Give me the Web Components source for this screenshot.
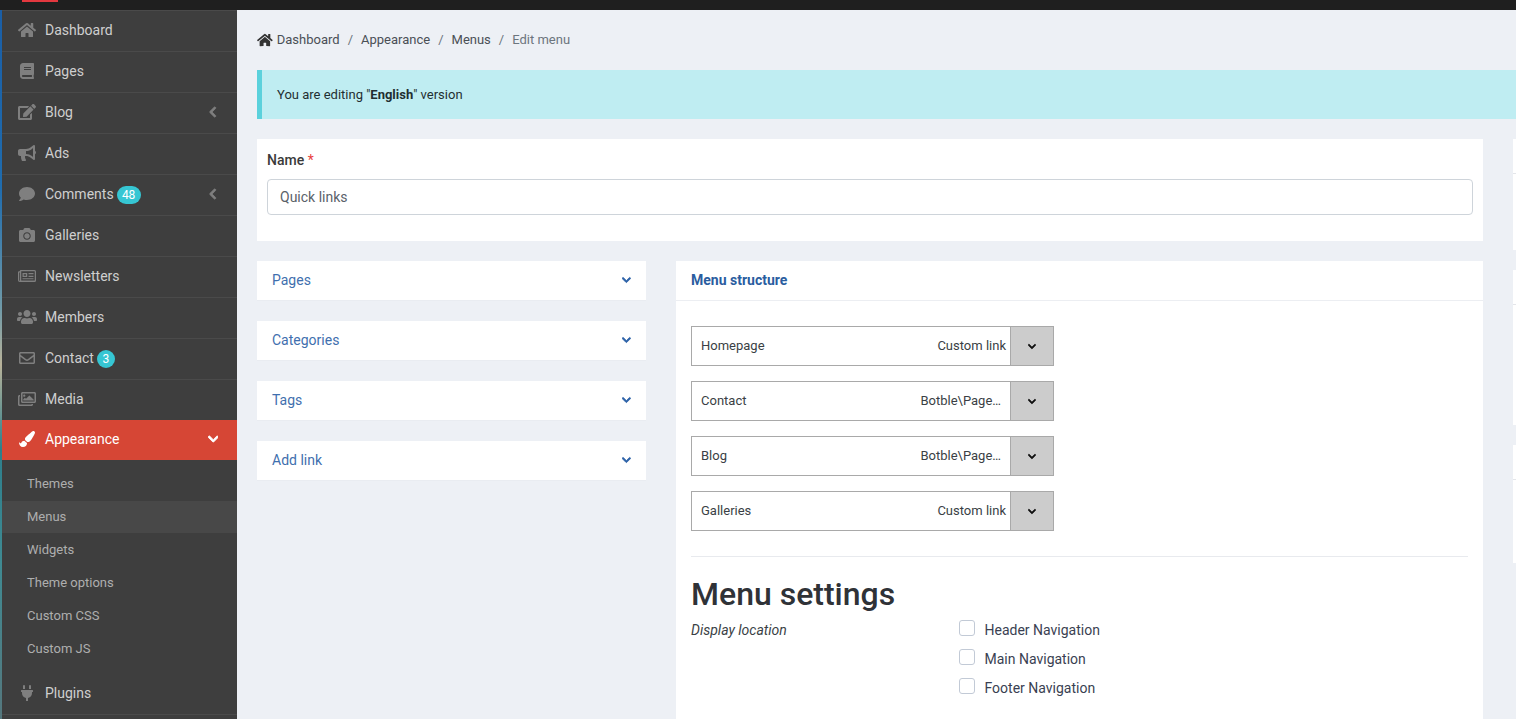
<!DOCTYPE html>
<html lang="en">
<head>
<meta charset="utf-8">
<title>Edit menu</title>
<style>
  html, body { margin: 0; height: 719px; overflow: hidden; }
  body { font-family: Roboto, "Liberation Sans", sans-serif; font-size: 14px; background: #edf0f5; }
</style>
</head>
<body>
<cms-app>
  <top-bar slot="top"></top-bar>
  <side-nav slot="side">
    <nav-item icon="home">Dashboard</nav-item>
    <nav-item icon="book">Pages</nav-item>
    <nav-item icon="edit" arrow="left">Blog</nav-item>
    <nav-item icon="bullhorn">Ads</nav-item>
    <nav-item icon="comment" arrow="left" badge="48">Comments</nav-item>
    <nav-item icon="camera">Galleries</nav-item>
    <nav-item icon="newspaper">Newsletters</nav-item>
    <nav-item icon="users">Members</nav-item>
    <nav-item icon="envelope" badge="3">Contact</nav-item>
    <nav-item icon="images" short>Media</nav-item>
    <nav-item icon="brush" arrow="down" active short>Appearance</nav-item>
    <sub-nav>
      <sub-item>Themes</sub-item>
      <sub-item current>Menus</sub-item>
      <sub-item>Widgets</sub-item>
      <sub-item>Theme options</sub-item>
      <sub-item>Custom CSS</sub-item>
      <sub-item>Custom JS</sub-item>
    </sub-nav>
    <nav-item icon="plug">Plugins</nav-item>
  </side-nav>

  <bread-crumb>
    <crumb-link home>Dashboard</crumb-link>
    <crumb-link>Appearance</crumb-link>
    <crumb-link>Menus</crumb-link>
    <crumb-link last>Edit menu</crumb-link>
  </bread-crumb>
  <info-alert>You are editing "<b>English</b>" version</info-alert>

  <edit-layout>
    <name-card></name-card>
    <div slot="left">
      <fold-panel>Pages</fold-panel>
      <fold-panel>Categories</fold-panel>
      <fold-panel>Tags</fold-panel>
      <fold-panel>Add link</fold-panel>
    </div>
    <menu-card slot="right">
      <menu-row kind="Custom link">Homepage</menu-row>
      <menu-row kind="Botble\Page…" trim>Contact</menu-row>
      <menu-row kind="Botble\Page…" trim>Blog</menu-row>
      <menu-row kind="Custom link">Galleries</menu-row>
      <menu-settings slot="settings">
        <check-line>Header Navigation</check-line>
        <check-line>Main Navigation</check-line>
        <check-line>Footer Navigation</check-line>
      </menu-settings>
    </menu-card>
    <side-stub slot="aside" style="height:111px"></side-stub>
    <side-stub slot="aside" style="height:155px"></side-stub>
    <side-stub slot="aside" style="height:118px"></side-stub>
  </edit-layout>
</cms-app>

<script>
const ICONS = {
  home: [576, 'M280.37 148.26L96 300.11V464a16 16 0 0 0 16 16l112.06-.29a16 16 0 0 0 15.92-16V368a16 16 0 0 1 16-16h64a16 16 0 0 1 16 16v95.64a16 16 0 0 0 16 16.05L464 480a16 16 0 0 0 16-16V300L295.67 148.26a12.19 12.19 0 0 0-15.3 0zM571.6 251.47L488 182.56V44.05a12 12 0 0 0-12-12h-56a12 12 0 0 0-12 12v72.61L318.47 43a48 48 0 0 0-61 0L4.34 251.47a12 12 0 0 0-1.6 16.9l25.5 31A12 12 0 0 0 45.15 301l235.22-193.74a12.19 12.19 0 0 1 15.3 0L530.9 301a12 12 0 0 0 16.9-1.6l25.5-31a12 12 0 0 0-1.7-16.93z'],
  book: [448, 'M448 360V24c0-13.3-10.7-24-24-24H96C43 0 0 43 0 96v320c0 53 43 96 96 96h328c13.3 0 24-10.7 24-24v-16c0-7.5-3.5-14.3-8.9-18.7-4.2-15.4-4.2-59.3 0-74.7 5.4-4.3 8.9-11.1 8.9-18.6zM128 134c0-3.3 2.7-6 6-6h212c3.3 0 6 2.7 6 6v20c0 3.3-2.7 6-6 6H134c-3.3 0-6-2.7-6-6v-20zm0 64c0-3.3 2.7-6 6-6h212c3.3 0 6 2.7 6 6v20c0 3.3-2.7 6-6 6H134c-3.3 0-6-2.7-6-6v-20zm253.4 250H96c-17.7 0-32-14.3-32-32 0-17.6 14.4-32 32-32h285.4c-1.9 17.1-1.9 46.9 0 64z'],
  edit: [576, 'M402.6 83.2l90.2 90.2c3.8 3.8 3.8 10 0 13.8L274.4 405.6l-92.8 10.3c-12.4 1.4-22.9-9.1-21.5-21.5l10.3-92.8L388.8 83.2c3.8-3.8 10-3.8 13.8 0zm162-22.9l-48.8-48.8c-15.2-15.2-39.9-15.2-55.2 0l-35.4 35.4c-3.8 3.8-3.8 10 0 13.8l90.2 90.2c3.8 3.8 10 3.8 13.8 0l35.4-35.4c15.2-15.3 15.2-40 0-55.2zM384 346.2V448H64V128h229.8c3.2 0 6.2-1.3 8.5-3.5l40-40c7.6-7.6 2.2-20.5-8.5-20.5H48C21.5 64 0 85.5 0 112v352c0 26.5 21.5 48 48 48h352c26.5 0 48-21.5 48-48V306.2c0-10.7-12.9-16-20.5-8.5l-40 40c-2.2 2.3-3.5 5.3-3.5 8.5z'],
  bullhorn: [576, 'M576 240c0-23.63-12.95-44.04-32-55.12V32.01C544 23.26 537.02 0 512 0c-7.12 0-14.19 2.38-19.98 7.02l-85.03 68.03C364.28 109.19 310.66 128 256 128H64c-35.35 0-64 28.65-64 64v96c0 35.35 28.65 64 64 64h33.7c-1.39 10.48-2.18 21.14-2.18 32 0 39.77 9.26 77.35 25.56 110.94 5.19 10.69 16.52 17.06 28.4 17.06h74.28c26.05 0 41.69-29.84 25.9-50.56-16.4-21.52-26.15-48.36-26.15-77.44 0-11.11 1.62-21.79 4.41-32H256c54.66 0 108.28 18.81 150.98 52.95l85.03 68.03a32.023 32.023 0 0 0 19.98 7.02c24.92 0 32-22.78 32-32V295.13C563.05 284.04 576 263.63 576 240zm-96 141.42l-33.05-26.44C392.95 311.78 325.12 288 256 288v-96c69.12 0 136.95-23.78 190.95-66.98L480 98.58v282.84z'],
  comment: [512, 'M256 32C114.6 32 0 125.1 0 240c0 49.6 21.4 95 57 130.7C44.5 421.1 2.7 466 2.2 466.5c-2.2 2.3-2.8 5.7-1.5 8.7S4.8 480 8 480c66.3 0 116-31.8 140.6-51.4 32.7 12.3 69 19.4 107.4 19.4 141.4 0 256-93.1 256-208S397.4 32 256 32z'],
  camera: [512, 'M512 144v288c0 26.5-21.5 48-48 48H48c-26.5 0-48-21.5-48-48V144c0-26.5 21.5-48 48-48h88l12.3-32.9c7-18.7 24.9-31.1 44.9-31.1h125.5c20 0 37.9 12.4 44.9 31.1L376 96h88c26.5 0 48 21.5 48 48zM376 288c0-66.2-53.8-120-120-120s-120 53.8-120 120 53.8 120 120 120 120-53.8 120-120zm-32 0c0 48.5-39.5 88-88 88s-88-39.5-88-88 39.5-88 88-88 88 39.5 88 88z'],
  // outline paper with a photo block and text lines, closer to the reference than the solid one
  newspaper: [576, 'M88 64h440a48 48 0 0 1 48 48v288a48 48 0 0 1-48 48H56a56 56 0 0 1-56-56V136a32 32 0 0 1 32-32h24V96a32 32 0 0 1 32-32zm16 40v296h424a8 8 0 0 0 8-8V112a8 8 0 0 0-8-8H104zM56 144H40v248a16 16 0 0 0 16 16 8 8 0 0 0 8-8V144H56zM144 160h152v128H144V160zm40 40v48h72v-48h-72zM336 160h160v40H336v-40zm0 88h160v40H336v-40zM144 328h352v32H144v-32z'],
  users: [640, 'M96 224c35.3 0 64-28.7 64-64s-28.7-64-64-64-64 28.7-64 64 28.7 64 64 64zm448 0c35.3 0 64-28.7 64-64s-28.7-64-64-64-64 28.7-64 64 28.7 64 64 64zm32 32h-64c-17.6 0-33.5 7.1-45.1 18.6 40.3 22.1 68.9 62 75.1 109.4h66c17.7 0 32-14.3 32-32v-32c0-35.3-28.7-64-64-64zm-256 0c61.9 0 112-50.1 112-112S381.9 32 320 32 208 82.1 208 144s50.1 112 112 112zm76.8 32h-8.3c-20.8 10-43.9 16-68.5 16s-47.6-6-68.5-16h-8.3C179.6 288 128 339.6 128 403.2V432c0 26.5 21.5 48 48 48h288c26.5 0 48-21.5 48-48v-28.8c0-63.6-51.6-115.2-115.2-115.2zm-223.7-13.4C161.5 263.1 145.6 256 128 256H64c-35.3 0-64 28.7-64 64v32c0 17.7 14.3 32 32 32h65.9c6.3-47.4 34.9-87.3 75.2-109.4z'],
  envelope: [512, 'M464 64H48C21.49 64 0 85.49 0 112v288c0 26.51 21.49 48 48 48h416c26.51 0 48-21.49 48-48V112c0-26.51-21.49-48-48-48zm0 48v40.805c-22.422 18.259-58.168 46.651-134.587 106.49-16.841 13.247-50.201 45.072-73.413 44.701-23.208.375-56.579-31.459-73.413-44.701C106.18 199.465 70.425 171.067 48 152.805V112h416zM48 400V214.398c22.914 18.251 55.409 43.862 104.938 82.646 21.857 17.205 60.134 55.186 103.062 54.955 42.717.231 80.509-37.199 103.053-54.947 49.528-38.783 82.032-64.401 104.947-82.653V400H48z'],
  images: [576, 'M480 416v16c0 26.51-21.49 48-48 48H48c-26.51 0-48-21.49-48-48V176c0-26.51 21.49-48 48-48h16v48H54a6 6 0 0 0-6 6v244a6 6 0 0 0 6 6h372a6 6 0 0 0 6-6v-10h48zM528 32H144c-26.51 0-48 21.49-48 48v256c0 26.51 21.49 48 48 48h384c26.51 0 48-21.49 48-48V80c0-26.51-21.49-48-48-48zm0 298a6 6 0 0 1-6 6H150a6 6 0 0 1-6-6V86a6 6 0 0 1 6-6h372a6 6 0 0 1 6 6v244zM236 148c0 19.9-16.1 36-36 36s-36-16.1-36-36 16.1-36 36-36 36 16.1 36 36zM168 304v-40l44-44c4.7-4.7 12.3-4.7 17 0l27 27 99-99c4.7-4.7 12.3-4.7 17 0l132 132v24H168z'],
  brush: [512, 'M167.02 309.34c-40.12 2.58-76.53 17.86-97.19 72.3-2.35 6.21-8 9.98-14.59 9.98-11.11 0-45.46-27.67-55.25-34.35C0 439.62 37.93 512 128 512c75.86 0 128-43.77 128-120.19 0-3.11-.65-6.08-.97-9.13l-88.01-73.34zM457.89 0c-15.16 0-29.37 6.71-40.21 16.45C213.27 199.05 192 203.34 192 257.09c0 13.7 3.25 26.76 8.73 38.7l63.82 53.18c7.21 1.8 14.64 3.03 22.39 3.03 62.11 0 98.11-45.47 211.16-256.46 7.38-14.35 13.9-29.85 13.9-45.99C512 20.64 486 0 457.89 0z'],
  plug: [384, 'M320,32a32,32,0,0,0-64,0v96h64Zm48,128H16A16,16,0,0,0,0,176v32a16,16,0,0,0,16,16H32v32A160.07,160.07,0,0,0,160,412.8V512h64V412.8A160.07,160.07,0,0,0,352,256V224h16a16,16,0,0,0,16-16V176A16,16,0,0,0,368,160ZM128,32a32,32,0,0,0-64,0v96h64Z'],
  down: [448, 'M207.029 381.476L12.686 187.132c-9.373-9.373-9.373-24.569 0-33.941l22.667-22.667c9.357-9.357 24.522-9.375 33.901-.04L224 284.505l154.745-154.021c9.379-9.335 24.544-9.317 33.901.04l22.667 22.667c9.373 9.373 9.373 24.569 0 33.941L240.971 381.476c-9.373 9.372-24.569 9.372-33.942 0z'],
  left: [320, 'M34.52 239.03L228.87 44.69c9.37-9.37 24.57-9.37 33.94 0l22.67 22.67c9.36 9.36 9.37 24.52.04 33.9L131.49 256l154.02 154.75c9.34 9.38 9.32 24.54-.04 33.9l-22.67 22.67c-9.37 9.37-24.57 9.37-33.94 0L34.52 272.97c-9.37-9.37-9.37-24.57 0-33.94z']
};

// small helper so every element below stays short
function define(tag, markup) {
  const cls = class extends HTMLElement {
    constructor() {
      super();
      this.attachShadow({ mode: 'open' });
    }
    connectedCallback() {
      this.shadowRoot.innerHTML = typeof markup === 'function' ? markup(this) : markup;
    }
  };
  customElements.define(tag, cls);
}

function iconSvg(name, size) {
  const [w, d] = ICONS[name];
  // the reference's chevrons are heavier than the plain path
  const heavy = name === 'down' || name === 'left';
  const stroke = heavy ? ' stroke="currentColor" stroke-width="36" stroke-linejoin="round"' : '';
  return `<svg width="${size * w / 512}" height="${size}" viewBox="0 0 ${w} 512" fill="currentColor" aria-hidden="true"><path fill-rule="evenodd"${stroke} d="${d}"/></svg>`;
}

define('cms-app', `
  <style>
    :host { display: block; width: 1516px; height: 719px; overflow: hidden; }
    .body { display: flex; height: 709px; }
    .strip { width: 2px; flex: none; background: linear-gradient(#1a5ea6 0, #1f6cae 25%, #6f9aa8 42%, #b9b39a 50%, #2d7f8c 62%, #3f8a92 78%, #55777d 100%); }
    .side { width: 235px; flex: none; background: #3e3e3e; }
    main { flex: 1; min-width: 0; padding: 0 0 0 20px; overflow: hidden; }
  </style>
  <slot name="top"></slot>
  <div class="body">
    <div class="strip"></div>
    <div class="side"><slot name="side"></slot></div>
    <main><slot></slot></main>
  </div>
`);

define('top-bar', `
  <style>
    :host { display: block; height: 10px; background: #1f1f1f; }
    .logo { width: 36px; height: 2px; margin-left: 22px; background: #e3383f; }
  </style>
  <div class="logo"></div>
`);

define('side-nav', `
  <style>:host { display: block; border-top: 1px solid #4a4a4a; }</style>
  <slot></slot>
`);

define('nav-item', el => {
  const arrow = el.getAttribute('arrow');
  const badge = el.getAttribute('badge');
  const active = el.hasAttribute('active');
  return `
  <style>
    :host { display: block; }
    .row {
      display: flex; align-items: center; box-sizing: border-box;
      height: ${el.hasAttribute('short') ? 40 : 41}px;
      padding-bottom: 2px;
      border-bottom: ${el.hasAttribute('short') ? 0 : 1}px solid #4a4a4a;
      background: ${active ? '#d64635' : 'transparent'};
      color: ${active ? '#fff' : '#cfcfcf'};
    }
    .ico { width: 50px; margin-right: -7px; flex: none; display: flex; justify-content: center; color: ${active ? '#fff' : '#7f7f7f'}; }
    .ico svg { display: block; }
    .label { font-size: 14px; line-height: 20px; }
    .badge {
      display: inline-block; box-sizing: border-box; min-width: 18px; height: 18px; margin-left: 3px;
      ${badge && badge.length > 1 ? 'width: 24px;' : ''} margin-top: 2px; border-radius: 9px; background: #36c6d3;
      color: #fff; font-size: 12px; line-height: 18px; text-align: center;
    }
    .arrow { margin-left: auto; width: 14px; margin-right: 17px; display: flex; justify-content: center; color: ${active ? '#fff' : '#7f7f7f'}; }
  </style>
  <div class="row">
    <span class="ico">${iconSvg(el.getAttribute('icon'), 16)}</span>
    <span class="label"><slot></slot></span>
    ${badge ? `<span class="badge">${badge}</span>` : ''}
    ${arrow ? `<span class="arrow">${iconSvg(arrow, 12)}</span>` : ''}
  </div>`;
});

define('sub-nav', `
  <style>:host { display: block; padding: 7px 0 9px; }</style>
  <slot></slot>
`);

define('sub-item', el => `
  <style>
    :host { display: block; height: 33px; box-sizing: border-box; padding-left: 25px; font-size: 13px; line-height: 33px; color: #aeaeae; ${el.hasAttribute('current') ? 'background: #484848; box-shadow: inset 0 1px 0 #3e3e3e;' : ''} }
  </style>
  <slot></slot>
`);

define('bread-crumb', `
  <style>
    :host { display: flex; align-items: center; height: 60px; font-size: 13px; }
  </style>
  <slot></slot>
`);

define('crumb-link', el => `
  <style>
    :host { display: inline-flex; align-items: center; color: ${el.hasAttribute('last') ? '#6c757d' : '#4a4f55'}; line-height: 20px; }
    svg { margin-right: 4px; color: #333; }
    .sep { margin: 0 8px; color: #6c757d; }
  </style>
  ${el.hasAttribute('home') ? iconSvg('home', 14) : ''}<slot></slot>${el.hasAttribute('last') ? '' : '<span class="sep">/</span>'}
`);

define('info-alert', `
  <style>
    :host { display: block; box-sizing: border-box; width: 1300px; height: 49px; padding-left: 15px; border-left: 5px solid #5bd1dc; background: #bfedf2; color: #1f2f31; font-size: 13px; line-height: 49px; }
  </style>
  <slot></slot>
`);

define('edit-layout', `
  <style>
    :host { display: flex; gap: 30px; width: 1300px; margin-top: 20px; }
    .main { width: 1226px; flex: none; display: flex; flex-direction: column; gap: 20px; }
    .cols { display: flex; gap: 30px; align-items: flex-start; }
    .left { width: 389px; flex: none; }
    .right { flex: 1; min-width: 0; }
    .aside { flex: 1; display: flex; flex-direction: column; gap: 20px; }
  </style>
  <div class="main">
    <slot></slot>
    <div class="cols">
      <div class="left"><slot name="left"></slot></div>
      <div class="right"><slot name="right"></slot></div>
    </div>
  </div>
  <div class="aside"><slot name="aside"></slot></div>
`);

define('side-stub', `
  <style>
    :host { display: block; background: #fff; }
    .head { height: 34px; border-bottom: 1px solid #e4e6ea; }
  </style>
  <div class="head"></div>
`);

define('name-card', `
  <style>
    :host { display: block; box-sizing: border-box; height: 102px; padding: 11px 10px 0; background: #fff; }
    .lbl { font-weight: 500; font-size: 14px; line-height: 20px; color: #3a3a3a; margin-bottom: 9px; }
    .lbl i { font-style: normal; font-weight: 400; color: #e83e3e; }
    .field { box-sizing: border-box; height: 36px; padding: 0 12px; border: 1px solid #ced4da; border-radius: 4px; font-size: 14px; line-height: 34px; color: #5a626a; }
  </style>
  <div class="lbl">Name <i>*</i></div>
  <div class="field">Quick links</div>
`);

define('fold-panel', `
  <style>
    :host { display: flex; align-items: center; justify-content: space-between; box-sizing: border-box; height: 40px; margin-bottom: 20px; padding: 0 15px 2px; background: #fff; border-bottom: 1px solid #e9ecf1; color: #3f6fae; font-size: 14px; }
    svg { display: block; }
    .arr { color: #2d62a8; }
  </style>
  <span><slot></slot></span>
  <span class="arr">${iconSvg('down', 10)}</span>
`);

define('menu-card', `
  <style>
    :host { display: block; height: 470px; background: #fff; }
    .head { box-sizing: border-box; height: 40px; padding: 0 15px; border-bottom: 1px solid #eceef2; color: #2a5d9f; font-weight: 700; font-size: 14px; line-height: 39px; }
    .body { padding: 25px 15px 0; }
    .rows { display: flex; flex-direction: column; gap: 15px; }
    hr { height: 1px; margin: 25px 0 0; border: 0; background: #e8eaee; }
  </style>
  <div class="head">Menu structure</div>
  <div class="body">
    <div class="rows"><slot></slot></div>
    <hr>
    <slot name="settings"></slot>
  </div>
`);

define('menu-row', el => `
  <style>
    :host { display: flex; box-sizing: border-box; width: 363px; height: 40px; border: 1px solid #a9a9a9; background: #fff; color: #3a3f45; font-size: 13px; line-height: 38px; }
    .name { flex: 1; padding-left: 9px; }
    .kind { margin-right: ${el.hasAttribute('trim') ? 9 : 4}px; white-space: nowrap; }
    .tog { width: 43px; flex: none; display: flex; align-items: center; justify-content: center; box-sizing: border-box; border-left: 1px solid #a9a9a9; background: #ccc; color: #111; }
    svg { display: block; }
  </style>
  <span class="name"><slot></slot></span>
  <span class="kind">${el.getAttribute('kind')}</span>
  <span class="tog">${iconSvg('down', 9)}</span>
`);

define('menu-settings', `
  <style>
    :host { display: block; }
    h2 { margin: 18px 0 0; font-size: 32px; font-weight: 500; line-height: 38px; color: #2f3237; }
    .grid { display: grid; grid-template-columns: 268px 1fr; margin-top: 7px; }
    em { font-size: 14px; line-height: 20px; color: #3a3f45; }
    .opts { display: flex; flex-direction: column; gap: 9px; }
  </style>
  <h2>Menu settings</h2>
  <div class="grid">
    <em>Display location</em>
    <div class="opts"><slot></slot></div>
  </div>
`);

define('check-line', `
  <style>
    :host { display: flex; align-items: center; gap: 9.5px; height: 20px; font-size: 14px; line-height: 20px; color: #3a3f52; }
    .box { width: 16px; height: 16px; box-sizing: border-box; margin-top: -4px; border: 1px solid #c2cad6; border-radius: 3px; background: #fff; }
  </style>
  <span class="box"></span><span><slot></slot></span>
`);
</script>
</body>
</html>
